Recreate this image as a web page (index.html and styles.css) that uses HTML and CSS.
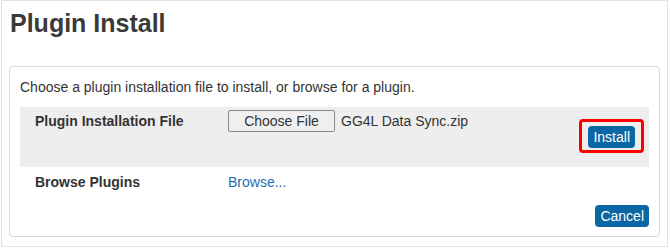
FILE: index.html
```html
<!DOCTYPE html>
<html>
<head>
<meta charset="utf-8">
<link rel="stylesheet" href="styles.css">
</head>
<body>
<div class="frame">
  <h1 class="title">Plugin Install</h1>
  <div class="panel">
    <p class="intro">Choose a plugin installation file to install, or browse for a plugin.</p>
    <div class="row row-shaded">
      <div class="label">Plugin Installation File</div>
      <div class="value">
        <span class="file-btn">Choose File</span>
        <span class="file-name">GG4L Data Sync.zip</span>
      </div>
      <div class="action">
        <span class="highlight"><button class="btn">Install</button></span>
      </div>
    </div>
    <div class="row row-plain">
      <div class="label">Browse Plugins</div>
      <div class="value"><a class="link" href="#">Browse...</a></div>
    </div>
    <div class="footer">
      <button class="btn">Cancel</button>
    </div>
  </div>
</div>
</body>
</html>
```
FILE: styles.css
```css
html, body {
  margin: 0;
  padding: 0;
  background: #ffffff;
}
body {
  font-family: "Liberation Sans", Arial, sans-serif;
  color: #333333;
}
.frame {
  box-sizing: border-box;
  margin-left: 1px;
  width: 667px;
  height: 247px;
  border: 1px solid #e3e3e3;
  padding: 7px 7px 0 7px;
}
.title {
  margin: 0;
  padding-left: 1px;
  font-size: 25px;
  line-height: 30px;
  font-weight: bold;
  color: #3a3a3a;
}
.panel {
  margin-top: 28px;
  border: 1px solid #dadada;
  border-radius: 4px;
  padding: 12px 10px 9px 10px;
}
.intro {
  margin: 0 0 12px 0;
  font-size: 14px;
  line-height: 16px;
}
.row {
  display: flex;
  align-items: flex-start;
  padding-left: 15px;
  padding-right: 5px;
}
.row-shaded {
  background: #eeeeee;
  height: 60px;
  box-sizing: border-box;
  padding-top: 3px;
}
.row-plain {
  padding-top: 7px;
  height: 28px;
  box-sizing: border-box;
}
.label {
  width: 193px;
  flex: none;
  font-size: 14px;
  font-weight: bold;
  line-height: 22px;
  color: #333333;
}
.row-plain .label,
.row-plain .value {
  line-height: 16px;
}
.value {
  flex: 1;
  display: flex;
  align-items: center;
  font-size: 14px;
  line-height: 22px;
}
.file-btn {
  display: inline-block;
  box-sizing: border-box;
  width: 107px;
  height: 22px;
  line-height: 20px;
  text-align: center;
  border: 1px solid #8a8a8a;
  border-radius: 2px;
  background: #efefef;
  color: #333333;
  font-size: 14px;
}
.file-name {
  margin-left: 6px;
  color: #333333;
}
.action {
  flex: none;
  margin-top: 9px;
}
.highlight {
  display: inline-block;
  border: 3px solid #ff0000;
  border-radius: 4px;
  padding: 4px 6px 2px 6px;
}
.highlight .btn {
  display: block;
}
.btn {
  font-family: "Liberation Sans", Arial, sans-serif;
  font-size: 14px;
  line-height: 22px;
  height: 22px;
  padding: 0 5px;
  border: none;
  border-radius: 4px;
  background: #0a67a3;
  color: #ffffff;
}
.link {
  color: #1f6fb0;
  text-decoration: none;
}
.footer {
  display: flex;
  justify-content: flex-end;
  margin-top: 10px;
  padding-right: 0;
}
```
